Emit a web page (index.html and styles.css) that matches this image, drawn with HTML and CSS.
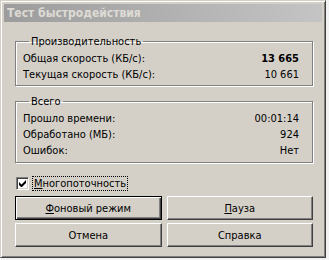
FILE: index.html
```html
<!DOCTYPE html>
<html lang="ru">
<head>
    <meta charset="UTF-8">
    <title>Тест быстродействия</title>
    <link rel="stylesheet" href="styles.css">
</head>
<body>
    <div class="window">
        <div class="titlebar">Тест быстродействия</div>
        <div class="content">
            <fieldset class="group">
                <legend>Производительность</legend>
                <div class="row"><span>Общая скорость (КБ/с):</span><span class="value bold">13 665</span></div>
                <div class="row"><span>Текущая скорость (КБ/с):</span><span class="value">10 661</span></div>
            </fieldset>
            <fieldset class="group group-total">
                <legend>Всего</legend>
                <div class="row"><span>Прошло времени:</span><span class="value">00:01:14</span></div>
                <div class="row"><span>Обработано (МБ):</span><span class="value">924</span></div>
                <div class="row"><span>Ошибок:</span><span class="value">Нет</span></div>
            </fieldset>
            <label class="check">
                <span class="box">
                    <svg width="7" height="7" viewBox="0 0 7 7"><path d="M0 2v3l2 2h1l4-4V0L2.5 4.5z" fill="#000"/></svg>
                </span>
                <span class="focus"><u>М</u>ногопоточность</span>
            </label>
            <div class="buttons">
                <button class="btn default"><u>Ф</u>оновый режим</button>
                <button class="btn"><u>П</u>ауза</button>
                <button class="btn">Отмена</button>
                <button class="btn">Справка</button>
            </div>
        </div>
    </div>
</body>
</html>
```

FILE: styles.css
```css
body {
    margin: 0;
    background: #f2f2f2;
    font-family: "DejaVu Sans Condensed", "Liberation Sans", sans-serif;
    font-size: 11px;
    color: #000;
}
.window {
    width: 326px;
    height: 258px;
    box-sizing: border-box;
    background: #d4d0c8;
    border-top: 1px solid #d4d0c8;
    border-left: 1px solid #d4d0c8;
    border-right: 1px solid #404040;
    border-bottom: 1px solid #404040;
    box-shadow: inset 1px 1px 0 #fff, inset -1px -1px 0 #808080;
    padding: 3px;
}
.titlebar {
    height: 18px;
    line-height: 18px;
    padding-left: 3px;
    background: linear-gradient(to right, #9c9c9c, #c4c4c4);
    color: #dedbd5;
    font-weight: bold;
    font-size: 12px;
}
.content {
    padding: 13px 9px 0 11px;
}
.group {
    margin: 0;
    padding: 3px 13px 2px 7px;
    border: 1px solid #808080;
    box-shadow: 1px 1px 0 #fff, inset 1px 1px 0 #fff;
}
.group legend {
    padding: 0 2px;
    margin-left: 6px;
    line-height: 13px;
}
.group-total {
    margin-top: 9px;
    padding-bottom: 3px;
}
.row {
    display: flex;
    justify-content: space-between;
    height: 16px;
    line-height: 16px;
}
.bold {
    font-weight: bold;
}
.check {
    display: flex;
    align-items: center;
    margin: 13px 0 0 1px;
    height: 14px;
}
.box {
    width: 13px;
    height: 13px;
    box-sizing: border-box;
    background: #fff;
    border-top: 1px solid #808080;
    border-left: 1px solid #808080;
    border-right: 1px solid #fff;
    border-bottom: 1px solid #fff;
    box-shadow: inset 1px 1px 0 #404040, inset -1px -1px 0 #d4d0c8;
    display: flex;
    align-items: center;
    justify-content: center;
}
.focus {
    margin-left: 4px;
    padding: 0 1px;
    outline: 1px dotted #000;
}
.buttons {
    display: grid;
    grid-template-columns: 1fr 1fr;
    gap: 3px 5px;
    margin-top: 6px;
}
.btn {
    height: 24px;
    font: inherit;
    color: #000;
    background: #d4d0c8;
    border-top: 1px solid #fff;
    border-left: 1px solid #fff;
    border-right: 1px solid #404040;
    border-bottom: 1px solid #404040;
    box-shadow: inset -1px -1px 0 #808080;
    padding: 0;
}
.btn.default {
    border: 1px solid #000;
    box-shadow: inset 1px 1px 0 #fff, inset -1px -1px 0 #404040, inset -2px -2px 0 #808080;
}
```
